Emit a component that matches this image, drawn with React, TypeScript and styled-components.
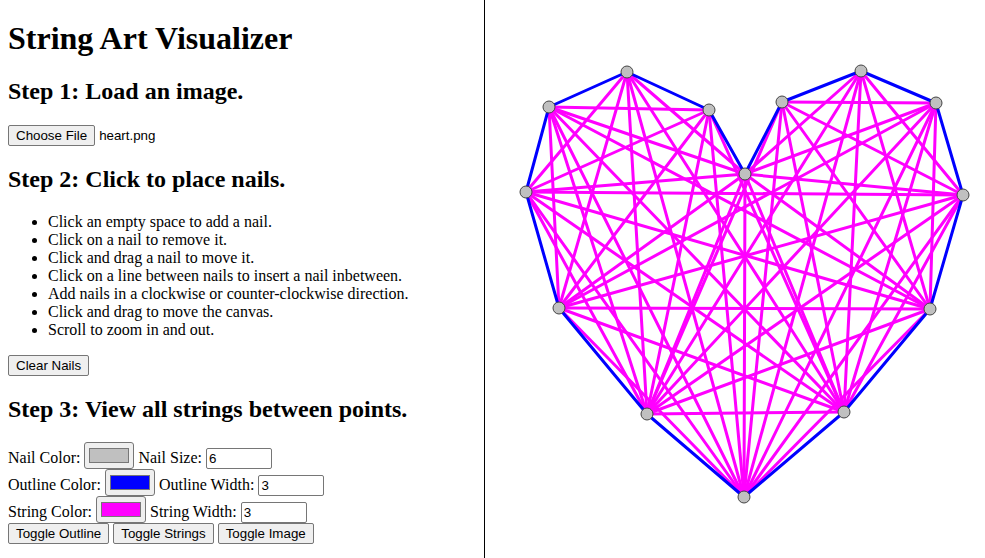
import React from 'react';
import styled, { createGlobalStyle } from 'styled-components';

const GlobalStyle = createGlobalStyle`
    html, body {
        margin: 0;
        padding: 0;
        background: #fff;
    }
    body {
        font-family: 'Liberation Serif', 'Times New Roman', serif;
        font-size: 16px;
        color: #000;
    }
`;

const Page = styled.div`
    display: flex;
    height: 100vh;
    overflow: hidden;
`;

const Sidebar = styled.div`
    width: 485px;
    flex-shrink: 0;
    box-sizing: border-box;
    padding: 0 8px;
    border-right: 1px solid #000;
    overflow: hidden;
`;

const Title = styled.h1`
    font-size: 32px;
    font-weight: 700;
    margin: 19.5px 0 21.44px;
`;

const StepTitle = styled.h2`
    font-size: 24px;
    font-weight: 700;
    margin: 19.92px 0;
`;

const FileRow = styled.div`
    display: flex;
    align-items: center;
    gap: 4px;
    font-family: 'Liberation Sans', Arial, sans-serif;
    font-size: 13.333px;
`;

const PushButton = styled.button`
    font-family: 'Liberation Sans', Arial, sans-serif;
    font-size: 13.333px;
    color: #000;
    background: #efefef;
    border: 1px solid #767676;
    border-radius: 2px;
    padding: 2px 7px;
    margin: 0;
    line-height: normal;
    cursor: pointer;
`;

const Hints = styled.ul`
    margin: 16px 0;
    padding-left: 40px;
    list-style: disc;
`;

const ControlRow = styled.div`
    line-height: normal;
`;

const ColorInput = styled.input`
    width: 50px;
    height: 27px;
    box-sizing: border-box;
    padding: 1px 2px;
    margin: 0;
    border: 1px solid #767676;
    border-radius: 3px;
    background: #efefef;
    vertical-align: baseline;
    cursor: pointer;

    &::-webkit-color-swatch-wrapper {
        padding: 4px 2px;
    }
    &::-webkit-color-swatch {
        border: 1px solid #777;
        border-radius: 0;
    }
`;

const SizeInput = styled.input`
    width: 66px;
    height: 21px;
    box-sizing: border-box;
    padding: 1px 2px;
    margin: 0;
    border: 1px solid #767676;
    border-radius: 2px;
    font-family: 'Liberation Sans', Arial, sans-serif;
    font-size: 13.333px;
    color: #000;
`;

const ButtonRow = styled.div`
    display: flex;
    gap: 4px;
`;

const CanvasArea = styled.div`
    flex: 1;
    background: #fff;
`;

type Pt = [number, number];

const nails: Pt[] = [
    [627, 72],
    [709, 110],
    [745, 174],
    [782, 102],
    [861, 71],
    [936, 103],
    [963, 195],
    [930, 309],
    [844, 412],
    [744, 497],
    [647, 414],
    [559, 308],
    [526, 192],
    [549, 107],
];

// point-in-polygon (ray casting)
const inside = (p: Pt, poly: Pt[]) => {
    let hit = false;
    for (let i = 0, j = poly.length - 1; i < poly.length; j = i++) {
        const [xi, yi] = poly[i];
        const [xj, yj] = poly[j];
        if (yi > p[1] !== yj > p[1] && p[0] < ((xj - xi) * (p[1] - yi)) / (yj - yi) + xi) hit = !hit;
    }
    return hit;
};

// only strings that stay within the outline
const strings: [number, number][] = [];
for (let i = 0; i < nails.length; i++) {
    for (let j = i + 1; j < nails.length; j++) {
        const adjacent = j === i + 1 || (i === 0 && j === nails.length - 1);
        if (adjacent) continue;
        let ok = true;
        for (let k = 1; k < 20 && ok; k++) {
            const t = k / 20;
            const p: Pt = [nails[i][0] + (nails[j][0] - nails[i][0]) * t, nails[i][1] + (nails[j][1] - nails[i][1]) * t];
            if (!inside(p, nails)) ok = false;
        }
        if (ok) strings.push([i, j]);
    }
}

const hints = [
    'Click an empty space to add a nail.',
    'Click on a nail to remove it.',
    'Click and drag a nail to move it.',
    'Click on a line between nails to insert a nail inbetween.',
    'Add nails in a clockwise or counter-clockwise direction.',
    'Click and drag to move the canvas.',
    'Scroll to zoom in and out.',
];

const App = () => {
    const outline = nails.map(([x, y]) => `${x},${y}`).join(' ');
    return (
        <>
            <GlobalStyle />
            <Page>
                <Sidebar>
                    <Title>String Art Visualizer</Title>
                    <StepTitle>Step 1: Load an image.</StepTitle>
                    <FileRow>
                        <PushButton type='button'>Choose File</PushButton>
                        <span>heart.png</span>
                    </FileRow>
                    <StepTitle>Step 2: Click to place nails.</StepTitle>
                    <Hints>
                        {hints.map((h) => (
                            <li key={h}>{h}</li>
                        ))}
                    </Hints>
                    <PushButton type='button'>Clear Nails</PushButton>
                    <StepTitle>Step 3: View all strings between points.</StepTitle>
                    <ControlRow>
                        Nail Color: <ColorInput type='color' defaultValue='#c0c0c0' /> Nail Size:{' '}
                        <SizeInput type='text' defaultValue='6' />
                    </ControlRow>
                    <ControlRow>
                        Outline Color: <ColorInput type='color' defaultValue='#0000ff' /> Outline Width:{' '}
                        <SizeInput type='text' defaultValue='3' />
                    </ControlRow>
                    <ControlRow>
                        String Color: <ColorInput type='color' defaultValue='#ff00ff' /> String Width:{' '}
                        <SizeInput type='text' defaultValue='3' />
                    </ControlRow>
                    <ButtonRow>
                        <PushButton type='button'>Toggle Outline</PushButton>
                        <PushButton type='button'>Toggle Strings</PushButton>
                        <PushButton type='button'>Toggle Image</PushButton>
                    </ButtonRow>
                </Sidebar>
                <CanvasArea>
                    <svg width='500' height='558' viewBox='485 0 500 558'>
                        <g stroke='#ff00ff' strokeWidth='3' strokeLinecap='round'>
                            {strings.map(([a, b]) => (
                                <line
                                    key={`${a}-${b}`}
                                    x1={nails[a][0]}
                                    y1={nails[a][1]}
                                    x2={nails[b][0]}
                                    y2={nails[b][1]}
                                />
                            ))}
                        </g>
                        <polygon points={outline} fill='none' stroke='#0000ff' strokeWidth='3' strokeLinejoin='round' />
                        {nails.map(([x, y]) => (
                            <circle key={`${x}-${y}`} cx={x} cy={y} r='6' fill='#c0c0c0' stroke='#444' strokeWidth='1' />
                        ))}
                    </svg>
                </CanvasArea>
            </Page>
        </>
    );
};

export default App;
